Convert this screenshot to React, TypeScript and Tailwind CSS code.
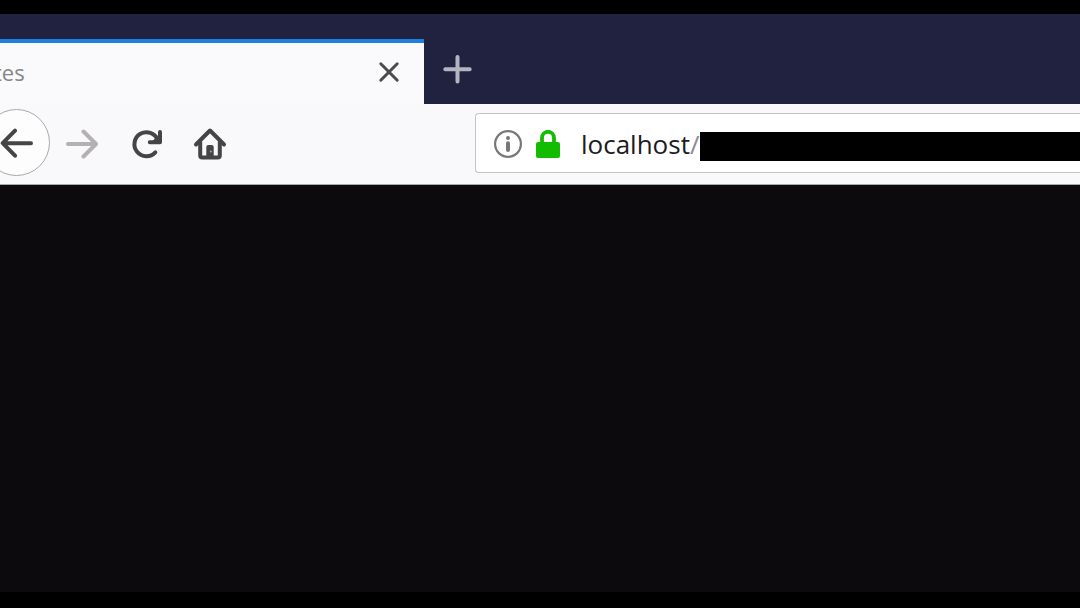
import { useState } from "react";

function CloseIcon() {
  return (
    <svg width="22" height="22" viewBox="0 0 22 22" fill="none" stroke="#4b4b4d" strokeWidth="3" strokeLinecap="round" aria-hidden="true">
      <path d="M2.8 2.8 19.2 19.2M19.2 2.8 2.8 19.2" />
    </svg>
  );
}

function PlusIcon() {
  return (
    <svg width="30" height="30" viewBox="0 0 30 30" fill="none" stroke="#b3b4c2" strokeWidth="4" strokeLinecap="round" aria-hidden="true">
      <path d="M15.5 3V27.4M3.3 15.2H27.7" />
    </svg>
  );
}

function BackIcon() {
  return (
    <svg width="34" height="30" viewBox="0 0 34 30" fill="none" stroke="#454545" strokeWidth="4" strokeLinecap="round" strokeLinejoin="round" aria-hidden="true">
      <path d="M31 15.2H3M15 2.7 2.7 15.2 15 27.7" />
    </svg>
  );
}

function ForwardIcon() {
  return (
    <svg width="34" height="30" viewBox="0 0 34 30" fill="none" stroke="#b3b1b3" strokeWidth="4" strokeLinecap="round" strokeLinejoin="round" aria-hidden="true">
      <path d="M3 15H31M18.5 2.5 31 15 18.5 27.5" />
    </svg>
  );
}

function ReloadIcon() {
  return (
    <svg width="32" height="32" viewBox="0 0 32 32" fill="none" stroke="#454547" strokeWidth="4" strokeLinecap="round" strokeLinejoin="round" aria-hidden="true">
      <path d="M24.3 24.3A12 12 0 1 1 26.6 11.8" />
      <path d="M29 4V14.2H18.8" />
      <path d="M28.6 6.5V13.8H21.5Z" fill="#454547" strokeWidth="1" />
    </svg>
  );
}

function HomeIcon() {
  return (
    <svg width="34" height="34" viewBox="0 0 34 34" fill="none" stroke="#454547" strokeWidth="4" strokeLinecap="round" strokeLinejoin="round" aria-hidden="true">
      <path d="M3 17.5 17 3.5 31 17.5" />
      <path d="M7.2 15V28.5Q7.2 30.5 9.2 30.5H24.8Q26.8 30.5 26.8 28.5V15" />
      <path d="M13.3 31V20Q13.3 18 15.3 18H18.7Q20.7 18 20.7 20V31Z" fill="#454547" stroke="none" />
      <circle cx="17.8" cy="24.5" r="1" fill="#a5a5a5" stroke="none" />
    </svg>
  );
}

function InfoIcon() {
  return (
    <svg width="28" height="28" viewBox="0 0 28 28" aria-hidden="true">
      <circle cx="14" cy="14" r="12.9" fill="none" stroke="#77777a" strokeWidth="2.2" />
      <circle cx="14" cy="8" r="2" fill="#77777a" />
      <path d="M14 13.3V20" stroke="#77777a" strokeWidth="4" strokeLinecap="round" />
    </svg>
  );
}

function LockIcon() {
  return (
    <svg width="26" height="28" viewBox="0 0 26 28" aria-hidden="true">
      <path d="M7 14V7.8A6 6 0 0 1 19 7.8V14" fill="none" stroke="#12bc00" strokeWidth="3.8" />
      <rect x="1" y="12" width="24" height="16" rx="2" fill="#12bc00" />
    </svg>
  );
}

export default function App() {
  const [address, setAddress] = useState("localhost");

  return (
    <div className="flex min-h-screen flex-col overflow-hidden border-t-14 border-b-16 border-black bg-[#0c0a0d] font-['Open_Sans','Noto_Sans',sans-serif]">
      <header>
        <div className="flex items-end bg-[#20223f] pt-[25px]">
          <div className="flex h-[65px] w-[424px] items-center justify-between border-t-4 border-[#1f7fde] bg-[#faf9fb] pr-6 pb-1">
            <span className="-ml-1.5 text-[22px] leading-8 text-[#868688]">tes</span>
            <button type="button" aria-label="Close tab">
              <CloseIcon />
            </button>
          </div>
          <button type="button" aria-label="New tab" className="mb-5 ml-[18px]">
            <PlusIcon />
          </button>
        </div>

        <nav className="flex items-center border-b border-[#a9a8aa] bg-[#f9f8fa] pt-[5px] pb-2">
          <button
            type="button"
            aria-label="Back"
            className="-ml-[17px] flex size-[67px] shrink-0 items-center justify-center rounded-full border border-[#aaa9ab] bg-[#fdfdfd]"
          >
            <BackIcon />
          </button>
          <div className="ml-[15px] flex shrink-0 items-center gap-8 pt-0.5">
            <button type="button" aria-label="Forward">
              <ForwardIcon />
            </button>
            <button type="button" aria-label="Reload">
              <ReloadIcon />
            </button>
            <button type="button" aria-label="Home" className="-ml-0.5">
              <HomeIcon />
            </button>
          </div>
          <div className="ml-62 flex h-[60px] min-w-0 flex-1 items-center rounded-l border border-r-0 border-[#c4c3c5] bg-white pt-0.5 pl-[18px]">
            <button type="button" aria-label="Site information" className="shrink-0">
              <InfoIcon />
            </button>
            <span className="ml-[13px] shrink-0">
              <LockIcon />
            </span>
            <input
              type="text"
              aria-label="Address"
              value={address}
              onChange={(event) => setAddress(event.target.value)}
              className="ml-5 w-[110px] shrink-0 text-[26px] leading-9 text-[#1c1c1e] outline-none"
            />
            <span className="-ml-px shrink-0 text-[26px] leading-9 text-[#8c8c8e]">/</span>
            <span className="mt-1.5 h-[29px] min-w-0 flex-1 bg-black" />
          </div>
        </nav>
      </header>
      <main className="flex-1" />
    </div>
  );
}
